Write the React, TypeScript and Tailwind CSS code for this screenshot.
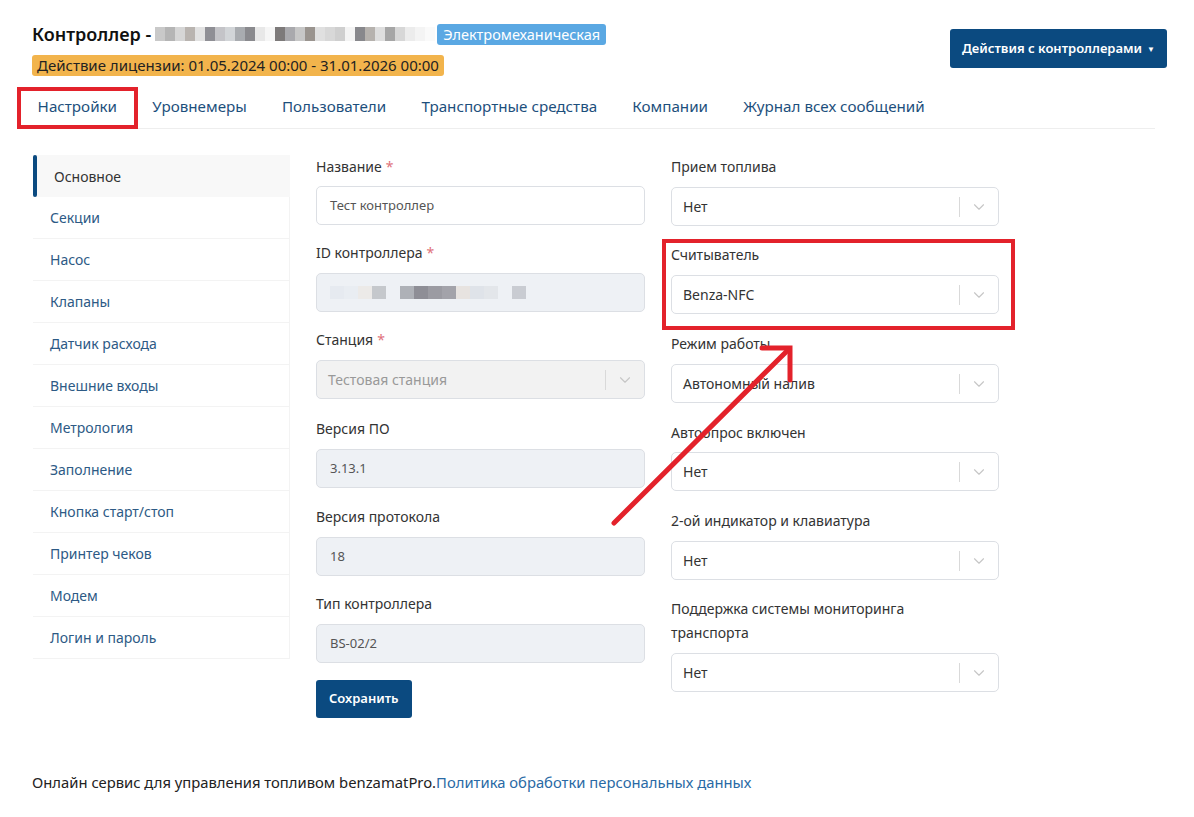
import { ChevronDown } from 'lucide-react';

const sideItems = [
  'Основное',
  'Секции',
  'Насос',
  'Клапаны',
  'Датчик расхода',
  'Внешние входы',
  'Метрология',
  'Заполнение',
  'Кнопка старт/стоп',
  'Принтер чеков',
  'Модем',
  'Логин и пароль',
];

const tabs = ['Настройки', 'Уровнемеры', 'Пользователи', 'Транспортные средства', 'Компании', 'Журнал всех сообщений'];

// pixelated blur imitation
const titleBlur = [
  '#c9c9c9', '#b5b5b5', '#d6d6d6', '#b9b4b0', '#e2e2e2', '#8f8f95', '#c4c4c8', '#d2d5d8', '#a9acb0', '#8a8a8e', '#e8e8e8',
  '#f6f6f6', '#7d7a7a', '#a9a9ad', '#c7c7c7', '#9a948f', '#e0e0e0', '#d8d8d8', '#cfcfcf', '#f4f4f4', '#88888c', '#b6b2ae',
  '#dedede', '#a6a6a6', '#d7d7d7', '#ececec', '#f4f4f4', '#fafafa',
];
const idBlur = ['#e6eaf0', '#e9edf2', '#eceae8', '#c5c8cc', '#eef1f5', '#aeb1b7', '#8e8e96', '#9b9ba2', '#a3a3aa', '#e7e3e0', '#dfe3e9', '#e3e6ea', '#eef1f5', '#c9ccd2'];

function Label({ text, req }: { text: string; req?: boolean }) {
  return (
    <div className="text-[14px] leading-[24px] text-[#333]">
      {text}
      {req && <span className="ml-1 text-[#e0727a]">*</span>}
    </div>
  );
}

function Input({ value, disabled, children }: { value?: string; disabled?: boolean; children?: React.ReactNode }) {
  return (
    <div
      className={
        'flex h-[39px] items-center rounded-[5px] border border-[#dcdfe4] px-[13px] text-[13px] text-[#555] ' +
        (disabled ? 'bg-[#eef1f5]' : 'bg-white')
      }
    >
      {value}
      {children}
    </div>
  );
}

function Select({ value, disabled }: { value: string; disabled?: boolean }) {
  return (
    <div
      className={
        'flex h-[39px] items-center rounded-[5px] border border-[#dcdfe4] pl-[11px] text-[14px] ' +
        (disabled ? 'bg-[#f2f2f2] text-[#999]' : 'bg-white text-[#333]')
      }
    >
      <span className="flex-1">{value}</span>
      <span className="h-[20px] w-px bg-[#d9d9d9]" />
      <span className="flex w-[38px] justify-center text-[#c6c6c6]">
        <ChevronDown size={18} strokeWidth={1.5} />
      </span>
    </div>
  );
}

export default function App() {
  return (
    <div className="relative min-h-[817px] bg-white font-['Noto_Sans',sans-serif] text-[#333]">
      <div className="px-[17px] pt-[22px]">
        {/* header */}
        <div className="flex items-start justify-between pl-[15px] pr-[10px]">
          <div>
            <div className="flex h-[24px] items-center">
              <span className="text-[18px] font-semibold text-[#111]">Контроллер -</span>
              <span className="ml-[4px] flex h-[14px]">
                {titleBlur.map((c, i) => (
                  <span key={i} className="h-[14px] w-[10px]" style={{ background: c }} />
                ))}
              </span>
              <span className="ml-[2px] rounded-[3px] bg-[#5aa8e3] px-[6px] py-[2px] text-[14.5px] leading-[17px] text-white">
                Электромеханическая
              </span>
            </div>
            <div className="mt-[9px] inline-block rounded-[3px] bg-[#f2b44c] px-[5px] py-[2px] text-[15px] leading-[17px] text-[#222]">
              Действие лицензии: 01.05.2024 00:00 - 31.01.2026 00:00
            </div>
          </div>
          <button className="mt-[7px] flex h-[39px] items-center gap-[5px] rounded-[3px] bg-[#0b4a80] px-[12px] text-[13px] font-semibold text-white">
            Действия с контроллерами
            <span className="text-[8px]">▼</span>
          </button>
        </div>

        {/* tabs */}
        <div className="mr-[22px] mt-[9px] flex border-b border-[#eeeeee] pb-[2px] pl-[3px]">
          {tabs.map((t) => (
            <div key={t} className="px-[17.6px] py-[8px] text-[15.2px] leading-[24px] text-[#1d4f7c]">
              {t}
            </div>
          ))}
        </div>

        {/* content */}
        <div className="mt-[26px] flex gap-[26px] pl-[16px]">
          <div className="w-[257px]">
            {sideItems.map((s, i) =>
              i === 0 ? (
                <div key={s} className="relative flex h-[42px] items-center bg-[#f8f8f8] pl-[21px] text-[14px] text-[#333]">
                  <span className="absolute left-0 top-0 h-[42px] w-[4px] rounded-[2px] bg-[#0b4a80]" />
                  {s}
                </div>
              ) : (
                <div key={s} className="flex h-[42px] items-center border-b border-r border-[#f3f3f3] pl-[17px] text-[14px] text-[#2d5a85]">
                  {s}
                </div>
              ),
            )}
          </div>

          <div className="w-[329px]">
            <Label text="Название" req />
            <div className="mt-[7px]">
              <Input value="Тест контроллер" />
            </div>
            <div className="mt-[16px]">
              <Label text="ID контроллера" req />
            </div>
            <div className="mt-[8px]">
              <Input disabled>
                <span className="flex h-[13px]">
                  {idBlur.map((c, i) => (
                    <span key={i} className="h-[13px] w-[14px]" style={{ background: c }} />
                  ))}
                </span>
              </Input>
            </div>
            <div className="mt-[16px]">
              <Label text="Станция" req />
            </div>
            <div className="mt-[8px]">
              <Select value="Тестовая станция" disabled />
            </div>
            <div className="mt-[18px]">
              <Label text="Версия ПО" />
            </div>
            <div className="mt-[8px]">
              <Input value="3.13.1" disabled />
            </div>
            <div className="mt-[17px]">
              <Label text="Версия протокола" />
            </div>
            <div className="mt-[8px]">
              <Input value="18" disabled />
            </div>
            <div className="mt-[16px]">
              <Label text="Тип контроллера" />
            </div>
            <div className="mt-[8px]">
              <Input value="BS-02/2" disabled />
            </div>
            <button className="mt-[17px] h-[38px] rounded-[3px] bg-[#0b4a80] px-[13px] text-[13px] font-semibold text-white">
              Сохранить
            </button>
          </div>

          <div className="w-[328px]">
            <Label text="Прием топлива" />
            <div className="mt-[8px]">
              <Select value="Нет" />
            </div>
            <div className="mt-[17px]">
              <Label text="Считыватель" />
            </div>
            <div className="mt-[8px]">
              <Select value="Benza-NFC" />
            </div>
            <div className="mt-[18px]">
              <Label text="Режим работы" />
            </div>
            <div className="mt-[8px]">
              <Select value="Автономный налив" />
            </div>
            <div className="mt-[18px]">
              <Label text="Автоопрос включен" />
            </div>
            <div className="mt-[7px]">
              <Select value="Нет" />
            </div>
            <div className="mt-[18px]">
              <Label text="2-ой индикатор и клавиатура" />
            </div>
            <div className="mt-[8px]">
              <Select value="Нет" />
            </div>
            <div className="mt-[17px] w-[260px]">
              <Label text="Поддержка системы мониторинга транспорта" />
            </div>
            <div className="mt-[8px]">
              <Select value="Нет" />
            </div>
          </div>
        </div>

        {/* footer */}
        <div className="mt-[53px] pl-[15px] text-[14.8px] text-[#222]">
          Онлайн сервис для управления топливом benzamatPro.
          <span className="text-[#2a6aa5]">Политика обработки персональных данных</span>
        </div>
      </div>

      {/* annotations */}
      <div className="pointer-events-none absolute left-[17px] top-[87px] h-[42px] w-[121px] border-[4px] border-[#e3222b]" />
      <div className="pointer-events-none absolute left-[662px] top-[239px] h-[91px] w-[353px] border-[4px] border-[#e3222b]" />
      <svg className="pointer-events-none absolute left-0 top-0" width="1194" height="817">
        <g stroke="#e3222b" strokeWidth="5" strokeLinecap="round" fill="none">
          <line x1="614" y1="523" x2="789" y2="349" />
          <polyline points="762,348 790,348 790,380" />
        </g>
      </svg>
    </div>
  );
}
